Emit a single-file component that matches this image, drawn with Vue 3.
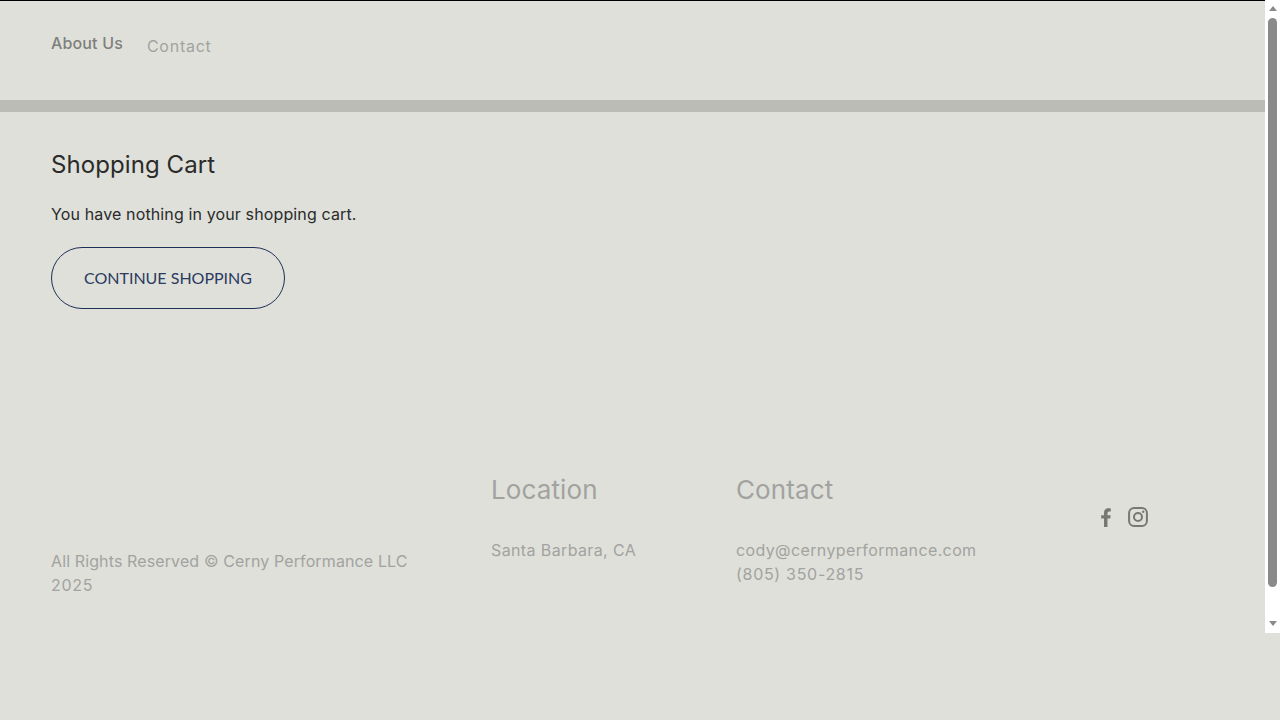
<script setup>
const nav = [
  { label: 'About Us', cls: 'active' },
  { label: 'Contact', cls: 'muted' }
]
</script>

<template>
  <div class="page">
    <header class="top">
      <a v-for="n in nav" :key="n.label" :class="['nav', n.cls]">{{ n.label }}</a>
    </header>
    <div class="band"></div>
    <main class="main">
      <h1>Shopping Cart</h1>
      <p>You have nothing in your shopping cart.</p>
      <a class="btn">CONTINUE SHOPPING</a>
    </main>
    <footer class="foot">
      <div class="copy">All Rights Reserved © Cerny Performance LLC <span class="digits">2025</span></div>
      <div class="loc">
        <h2>Location</h2>
        <div class="txt">Santa Barbara, CA</div>
      </div>
      <div class="con">
        <h2>Contact</h2>
        <div class="txt">cody@cernyperformance.com<br /><span class="digits">(805) 350-2815</span></div>
      </div>
      <div class="social">
        <svg width="11" height="19" viewBox="0 0 11 19"><path d="M3 19V10.600H.2V7.200H3V4.800C3 1.900 4.700.3 7.300.3c1.200 0 2.500.2 2.500.2v2.900H8.400c-1.400 0-1.900.9-1.900 1.800v2h3.200l-.5 3.400H6.500V19z" fill="#777874"/></svg>
        <svg width="20" height="20" viewBox="0 0 20 20" fill="none" stroke="#777874" stroke-width="2"><rect x="1.100" y="1.100" width="17.800" height="17.800" rx="5"/><circle cx="10" cy="10" r="4"/><circle cx="15.200" cy="4.800" r="1.200" fill="#777874" stroke="none"/></svg>
      </div>
    </footer>
    <div class="scrollbar">
      <span class="arrow up"></span>
      <span class="thumb"></span>
      <span class="arrow down"></span>
    </div>
  </div>
</template>

<style>
html, body { margin: 0; background: #dfe0da; overflow: hidden; }
</style>

<style scoped>
.page {
  position: relative;
  width: 1280px;
  height: 720px;
  overflow: hidden;
  background: #dfe0da;
  font-family: Inter, "Noto Sans", sans-serif;
  box-sizing: border-box;
  padding-right: 15px;
}
.top {
  height: 99px;
  border-top: 1px solid #000;
  display: flex;
  gap: 24px;
  padding-left: 51px;
}
.nav { font-size: 16px; line-height: 24px; }
.nav.active { color: #7f807c; font-weight: 500; margin-top: 30px; letter-spacing: .15px; }
.nav.muted { color: #a2a3a0; margin-top: 33px; letter-spacing: .75px; }
.band { height: 12px; background: #bbbcb6; }
.main { padding: 37px 51px 0; height: 360px; box-sizing: border-box; }
h1 { margin: 0; font-size: 24px; line-height: 32px; font-weight: 400; color: #2a2b2a; letter-spacing: .08px; }
p { margin: 21px 0 0; font-size: 16px; line-height: 24px; color: #2a2b2a; letter-spacing: .13px; }
.btn {
  display: flex; align-items: center; justify-content: center;
  margin-top: 21px;
  width: 234px; height: 62px; box-sizing: border-box;
  border: 1px solid #1f3058; border-radius: 31px;
  font-family: Lato, "Noto Sans", sans-serif;
  font-size: 16px; line-height: 20px; padding-bottom: 1px; color: #2a3a60;
}
.foot { display: flex; padding-left: 51px; color: #a2a3a0; }
.copy { width: 440px; padding-top: 77px; box-sizing: border-box; padding-right: 60px; font-size: 16px; line-height: 24px; letter-spacing: .12px; }
.digits { letter-spacing: .7px; }
.loc { width: 245px; }
.con { width: 365px; }
h2 { margin: 0; font-size: 26px; line-height: 36px; font-weight: 400; letter-spacing: .12px; }
.txt { margin-top: 30px; font-size: 16px; line-height: 24px; letter-spacing: .38px; }
.social { display: flex; align-items: center; gap: 16px; height: 20px; margin-top: 35px; }
.scrollbar {
  position: absolute; top: 0; right: 0; width: 15px; height: 633px; background: #fff;
  display: flex; flex-direction: column; align-items: center;
}
.arrow { width: 0; height: 0; border-left: 4.500px solid transparent; border-right: 4.500px solid transparent; }
.up { margin-top: 6px; border-bottom: 5px solid #8a8a8a; }
.down { margin-top: 34px; border-top: 5px solid #8a8a8a; }
.thumb { margin-top: 7px; width: 9px; height: 569px; background: #8a8a8a; border-radius: 5px; }
</style>
